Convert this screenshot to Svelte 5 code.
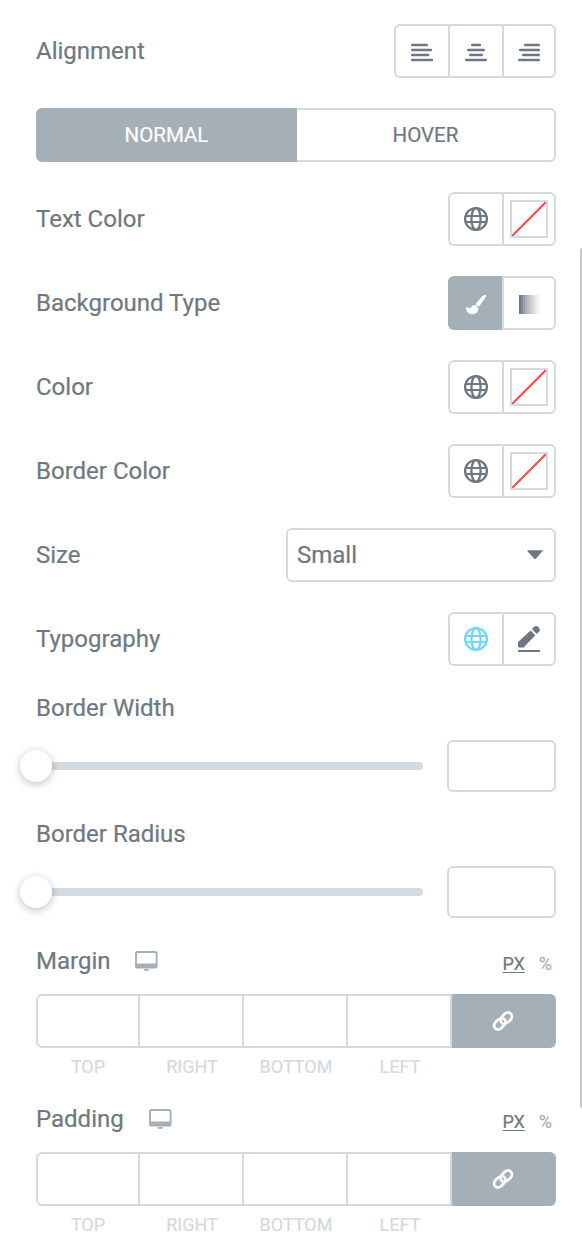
<script>
  const alignments = [
    { name: 'Left', d: 'M2.2 5H16.8M2.2 10H21M2.2 15H18.2M2.2 20H22' },
    { name: 'Center', d: 'M8.2 5H16M4.2 10H19.8M6.2 15H17.8M2.2 20H21.8' },
    { name: 'Right', d: 'M8.2 5H21.8M3.2 10H21.8M6.2 15H21.8M2.2 20H21.8' }
  ];
  const sliders = ['Border Width', 'Border Radius'];
  const boxes = ['Margin', 'Padding'];
  const sides = ['TOP', 'RIGHT', 'BOTTOM', 'LEFT'];
  const shades = [1, 0.87, 0.74, 0.62, 0.5, 0.4, 0.3, 0.2, 0.13, 0.08];
</script>

{#snippet globe()}
  <svg width="26" height="26" viewBox="0 0 26 26" fill="none" stroke="currentColor" stroke-width="2.3">
    <circle cx="13" cy="13" r="10.9" />
    <ellipse cx="13" cy="13" rx="4.6" ry="10.9" />
    <path d="M2.5 10H23.5M2.5 16H23.5" stroke-width="2" />
  </svg>
{/snippet}

{#snippet colorRow(label)}
  <div class="row">
    <span>{label}</span>
    <div class="group">
      <button class="cell" aria-label="Global color">{@render globe()}</button>
      <button class="cell" aria-label="Pick color">
        <span class="swatch">
          <svg width="34" height="34" viewBox="0 0 34 34"><path d="M0 34L34 0" stroke="#ff4a4a" stroke-width="2.1" /></svg>
        </span>
      </button>
    </div>
  </div>
{/snippet}

<main class="panel">
  <div class="row">
    <span>Alignment</span>
    <div class="group">
      {#each alignments as a}
        <button class="cell" aria-label={a.name}>
          <svg class="align" width="24" height="24" viewBox="0 0 24 24" fill="none" stroke="currentColor" stroke-width="2.4" stroke-linecap="round"><path d={a.d} /></svg>
        </button>
      {/each}
    </div>
  </div>

  <div class="tabs">
    <button class="tab active">NORMAL</button>
    <button class="tab">HOVER</button>
  </div>

  {@render colorRow('Text Color')}

  <div class="row">
    <span>Background Type</span>
    <div class="group">
      <button class="cell active" aria-label="Classic">
        <svg class="brush" width="22" height="22" viewBox="0 0 22 22" fill="currentColor">
          <path d="M20.7 1.1C19.5.7 18 1.5 16.7 2.8L11 9.4C10.6 10 10.8 10.5 11.4 10.9L13 12.2C13.6 12.7 14.1 12.6 14.5 12C17.1 8.3 20 4.4 21 2.3C21.2 1.7 21.1 1.3 20.7 1.1Z" />
          <path d="M9.8 10.9C8.2 10.9 7 11.7 6.3 13.1C5.7 14.4 4.4 14.5 3.2 13.7C2.3 13.1 1 12.9 1 14.1C1.1 17.7 3.6 20.2 7.3 20.2C11.2 20.2 13.5 17.9 13.4 14.5C13.4 13.9 13.1 13.4 12.6 13L10.8 11.3Z" />
        </svg>
      </button>
      <button class="cell" aria-label="Gradient">
        <svg width="22" height="19" viewBox="0 0 22 19" class="gradient">
          {#each shades as opacity, i}
            <rect x={1 + i * 2.1} width="2.1" height="19" fill="currentColor" {opacity} />
          {/each}
        </svg>
      </button>
    </div>
  </div>

  {@render colorRow('Color')}
  {@render colorRow('Border Color')}

  <div class="row">
    <span>Size</span>
    <button class="select">
      Small
      <svg width="16" height="10" viewBox="0 0 16 10" fill="currentColor"><path d="M1.2.3H14.8C15.8.3 15.9 1 15.3 1.6L9 8.5C8.3 9.2 7.7 9.2 7 8.5L.7 1.6C.1 1 .2.3 1.2.3Z" /></svg>
    </button>
  </div>

  <div class="row">
    <span>Typography</span>
    <div class="group">
      <button class="cell global" aria-label="Global font">{@render globe()}</button>
      <button class="cell" aria-label="Edit typography">
        <svg width="24" height="28" viewBox="0 0 24 28" fill="currentColor">
          <path d="M1 17L13.6 5.4L18.3 10.3L6.6 22.4H1.8Q1 22.4 1 21.6Z" />
          <path d="M14.9 4.1L17.2 1.8Q19.2.2 21.3 2.1L21.9 2.7Q23.7 4.8 22.1 6.7L19.7 9Z" />
          <path d="M1 25H23V27H1Z" />
        </svg>
      </button>
    </div>
  </div>

  {#each sliders as label}
    <div class="block">
      <span class="label">{label}</span>
      <div class="slider">
        <div class="track"><span class="handle"></span></div>
        <input aria-label={label} />
      </div>
    </div>
  {/each}

  {#each boxes as label}
    <div class="block">
      <div class="head">
        <span>{label}</span>
        <svg width="24" height="22" viewBox="0 0 24 22">
          <rect x="2" y="2" width="20.6" height="15.6" rx="1.6" fill="none" stroke="currentColor" stroke-width="1.9" />
          <path d="M1.6 13.6H22.6V16.5Q22.6 17.8 21.6 17.8H2.6Q1.6 17.8 1.6 16.5ZM9.8 19H14.8V20.8H9.8Z" fill="currentColor" />
        </svg>
        <div class="units"><span class="unit chosen">PX</span><span class="unit">%</span></div>
      </div>
      <div class="dimensions">
        {#each sides as side}
          <label><input aria-label={side} /><span>{side}</span></label>
        {/each}
        <button class="link" aria-label="Link values">
          <svg width="24" height="24" viewBox="0 0 24 24" fill="none" stroke="currentColor" stroke-width="2.7" stroke-linecap="round">
            <path d="M11 14.2C9 12.7 9 9.9 10.6 8.2L13.6 5C15.3 3.2 17.8 2.9 19.6 4.5C21.4 6.2 21.3 8.9 19.6 10.7L17.4 12.9C16.4 13.9 15 14.3 13.8 13.9" />
            <path d="M13 9.8C15 11.3 15 14.1 13.4 15.8L10.4 19C8.7 20.8 6.2 21.1 4.4 19.5C2.6 17.8 2.7 15.1 4.4 13.3L6.6 11.1C7.6 10.1 9 9.7 10.2 10.1" />
          </svg>
        </button>
      </div>
    </div>
  {/each}

  <div class="scrollbar"></div>
</main>

<style>
  :global(body) { background: #fff; }
  :global(*) { box-sizing: border-box; }
  .panel {
    position: relative;
    display: flex;
    flex-direction: column;
    gap: 30px;
    width: 582px;
    height: 1250px;
    padding: 24px 26px 0 36px;
    overflow: hidden;
    color: #6d7882;
    font: 24px/24px Roboto, sans-serif;
    -webkit-text-stroke: 0.2px currentColor;
  }
  button, input {
    margin: 0;
    padding: 0;
    border: 2px solid #d5dadf;
    border-radius: 6px;
    background: #fff;
    color: inherit;
    font: inherit;
  }
  svg { display: block; flex: none; }
  .row { display: flex; align-items: center; justify-content: space-between; height: 54px; }
  .group { display: flex; height: 54px; }
  .cell {
    display: flex;
    align-items: center;
    justify-content: center;
    width: 54px;
    border-right-width: 0;
    border-radius: 0;
  }
  .cell:first-child { border-radius: 6px 0 0 6px; }
  .cell:last-child { border-right-width: 2px; border-radius: 0 6px 6px 0; }
  .active { border-color: #a4afb7; background: #a4afb7; color: #fff; }
  .global { color: #71d7f7; }
  .align { margin-top: 2px; }
  .brush { margin-top: 4px; }
  .swatch { width: 38px; height: 38px; border: 2px solid #d5dadf; }
  .gradient { margin-top: 2px; }
  .tabs { display: grid; grid-template-columns: 261px 259px; height: 54px; font-size: 20.5px; }
  .tab { border-left-width: 0; border-radius: 0 6px 6px 0; }
  .tab.active { border-width: 2px; border-radius: 6px 0 0 6px; }
  .select {
    display: flex;
    align-items: center;
    justify-content: space-between;
    width: 270px;
    height: 54px;
    padding: 0 11px 0 9px;
  }
  .block { display: flex; flex-direction: column; }
  .slider { display: flex; align-items: center; gap: 24px; margin-top: 20px; }
  .slider input { width: 109px; height: 52px; }
  .track { display: flex; align-items: center; flex: 1; height: 8px; border-radius: 4px; background: #d5dadf; }
  .handle {
    flex: none;
    width: 32px;
    height: 32px;
    margin-left: -16px;
    border-radius: 50%;
    background: #fff;
    box-shadow: 0 2px 8px rgba(0, 0, 0, 0.26);
  }
  .head { display: flex; align-items: center; height: 26px; }
  .head svg { margin-left: 24px; color: #a4afb7; }
  .units { display: flex; gap: 14px; margin: 6px 4px 0 auto; font-size: 18px; }
  .unit { color: #a4afb7; }
  .chosen { color: #6d7882; text-decoration: underline; text-decoration-thickness: 1px; text-underline-offset: 2px; }
  .dimensions { display: grid; grid-template-columns: repeat(5, 104px); height: 82px; margin-top: 20px; }
  .dimensions label { display: flex; flex-direction: column; gap: 9px; text-align: center; font-size: 18px; line-height: 20px; color: #d5dadf; }
  .dimensions input { width: 104px; height: 54px; border-left-width: 0; border-radius: 0; }
  .dimensions label:first-child input { border-left-width: 2px; border-radius: 6px 0 0 6px; }
  .link {
    display: flex;
    align-items: center;
    justify-content: center;
    height: 54px;
    padding-right: 2px;
    border: 0;
    border-radius: 0 6px 6px 0;
    background: #a4afb7;
    color: #fff;
  }
  .scrollbar { position: absolute; top: 248px; right: 0; width: 2px; height: 860px; border-radius: 2px 0 0 2px; background: #c7c7c7; }
</style>
